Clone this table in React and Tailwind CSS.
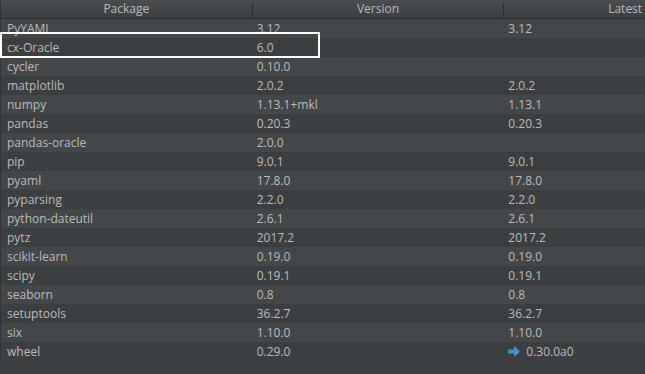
const rows = [
  ['PyYAML', '3.12', '3.12'],
  ['cx-Oracle', '6.0', ''],
  ['cycler', '0.10.0', ''],
  ['matplotlib', '2.0.2', '2.0.2'],
  ['numpy', '1.13.1+mkl', '1.13.1'],
  ['pandas', '0.20.3', '0.20.3'],
  ['pandas-oracle', '2.0.0', ''],
  ['pip', '9.0.1', '9.0.1'],
  ['pyaml', '17.8.0', '17.8.0'],
  ['pyparsing', '2.2.0', '2.2.0'],
  ['python-dateutil', '2.6.1', '2.6.1'],
  ['pytz', '2017.2', '2017.2'],
  ['scikit-learn', '0.19.0', '0.19.0'],
  ['scipy', '0.19.1', '0.19.1'],
  ['seaborn', '0.8', '0.8'],
  ['setuptools', '36.2.7', '36.2.7'],
  ['six', '1.10.0', '1.10.0'],
  ['wheel', '0.29.0', '0.30.0a0', true],
];

function UpgradeArrow() {
  return (
    <svg width="12" height="11" viewBox="0 0 12 11" className="mr-[6px] shrink-0">
      <path d="M0 3.5h6V0l6 5.5-6 5.5V7.5H0z" fill="#3d95c8" />
    </svg>
  );
}

function HeaderCell({ children, last }) {
  return (
    <div className={`${last ? 'w-[242px]' : 'w-[251px]'} h-full flex items-center justify-center relative`}>
      {children}
      {!last && <span className="absolute right-[-1px] top-[3px] bottom-[1px] w-px bg-[#2a2c2d]" />}
    </div>
  );
}

export default function App() {
  return (
    <div
      className="w-[645px] h-[374px] overflow-hidden bg-[#3c3f41] relative text-[12px] text-[#bbbbbb]"
      style={{ fontFamily: '"Open Sans", "Noto Sans", sans-serif' }}
    >
      <div className="w-[746px] border-l border-[#313335]">
        {/* header */}
        <div className="h-[19px] flex gap-px bg-gradient-to-b from-[#4a4d50] to-[#3d4043] border-b border-[#2b2d2e]">
          <HeaderCell>Package</HeaderCell>
          <HeaderCell>Version</HeaderCell>
          <HeaderCell last>Latest</HeaderCell>
        </div>

        {rows.map(([name, ver, latest, upgrade], i) => (
          <div
            key={name}
            className={`h-[19px] flex gap-px items-center ${i % 2 === 0 ? 'bg-[#43474a]' : 'bg-[#3c3f41]'}`}
          >
            <div className="w-[251px] pl-[6px] leading-[19px]">{name}</div>
            <div className="w-[251px] pl-[4px] leading-[19px]">{ver}</div>
            <div className="w-[242px] pl-[4px] leading-[19px] flex items-center">
              {upgrade && <UpgradeArrow />}
              {latest}
            </div>
          </div>
        ))}
      </div>

      {/* selection outline */}
      <div className="absolute left-0 top-[32px] w-[320px] h-[26px] border-2 border-white" />
    </div>
  );
}
